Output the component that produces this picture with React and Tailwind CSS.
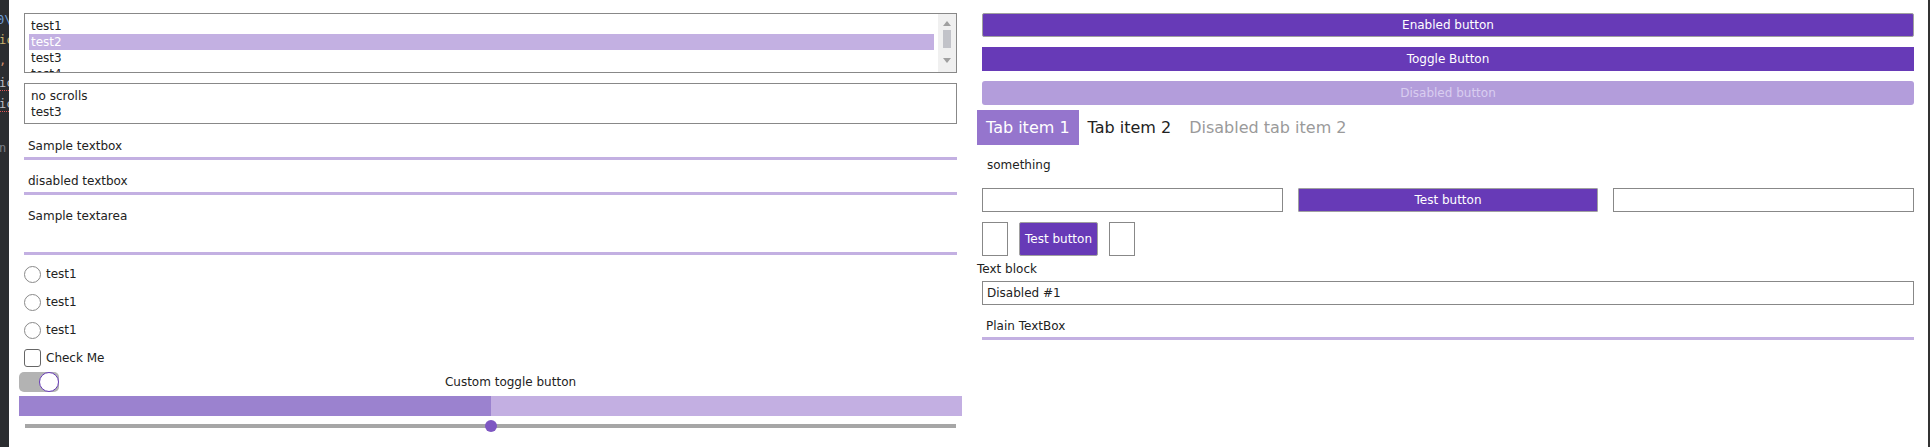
import React from 'react';

const listItems = ['test1', 'test2', 'test3', 'test4'];

const EditorEdge = () => (
  <div className="flex w-[9px] shrink-0 flex-col overflow-hidden bg-[#2b2d30] pt-[10px] font-['DejaVu_Sans_Mono',monospace] text-[12px] leading-[20px]">
    {/* cut-off code from the window behind */}
    <span className="-ml-[3px] text-[#6f9fd8]">0\</span>
    <span className="-ml-[1px] text-[#c9b26d]">ic</span>
    <span className="-ml-[1px] text-[#cf8e6d]">,</span>
    <span className="mt-[6px] -ml-[1px] border-b border-dotted border-[#e05555] leading-[14px] text-[#bcbec4]">ic</span>
    <span className="mt-[6px] -ml-[1px] border-b border-dotted border-[#e05555] leading-[14px] text-[#bcbec4]">ic</span>
    <span className="mt-[26px] -ml-[1px] text-[#7a7e85]">n</span>
  </div>
);

const ListBox = () => (
  <div className="mx-[5px] mt-[5px] flex h-[60px] border border-[#888]">
    <div className="flex-1 overflow-hidden px-[4px] pt-[4px]">
      {listItems.map((item) => (
        <div
          key={item}
          className={`h-4 pl-[2px] ${item === 'test2' ? 'bg-[#c3b0e2] text-white' : ''}`}
        >
          {item}
        </div>
      ))}
    </div>
    <div className="flex w-[18px] flex-col items-center bg-[#f0f0f0] pt-[7px]">
      <svg width="8" height="5" viewBox="0 0 8 5">
        <path d="M0 5 L4 0 L8 5 Z" fill="#a0a0a0" />
      </svg>
      <div className="mt-[4px] h-[18px] w-[8px] bg-[#c2c3c9]" />
      <svg className="mt-[10px]" width="8" height="5" viewBox="0 0 8 5">
        <path d="M0 0 L4 5 L8 0 Z" fill="#a0a0a0" />
      </svg>
    </div>
  </div>
);

const UnderlineBox = ({ text, className = '', height = 'h-[26px]', top = false }) => (
  <div
    className={`mx-[5px] ${height} flex border-b-[3px] border-[#c3b0e2] pl-[4px] ${
      top ? 'items-start pt-[4px]' : 'items-center'
    } ${className}`}
  >
    {text}
  </div>
);

const Radio = ({ label }) => (
  <div className="mx-[5px] flex h-[28px] items-center gap-[5px]">
    <div className="h-[17px] w-[17px] rounded-full border border-[#8a8a8a]" />
    <span>{label}</span>
  </div>
);

const LeftColumn = () => (
  <div className="flex w-[943px] shrink-0 flex-col">
    <ListBox />
    <div className="mx-[5px] mt-[10px] h-[41px] border border-[#888] pl-[6px] pt-[4px]">
      <div>no scrolls</div>
      <div>test3</div>
    </div>
    <UnderlineBox text="Sample textbox" className="mt-[10px]" />
    <UnderlineBox text="disabled textbox" className="mt-[9px]" />
    <UnderlineBox text="Sample textarea" className="mt-[9px]" height="h-[51px]" top />

    <div className="mt-[5px]">
      <Radio label="test1" />
      <Radio label="test1" />
      <Radio label="test1" />
      <div className="mx-[5px] flex h-[28px] items-center gap-[5px]">
        <div className="h-[18px] w-[17px] rounded-[3px] border border-[#666]" />
        <span>Check Me</span>
      </div>
    </div>

    {/* custom toggle */}
    <div className="flex h-[20px] items-center">
      <div className="flex h-[20px] w-[40px] justify-end rounded-[5px] bg-[#b3b3b3]">
        <div className="h-[20px] w-[20px] rounded-full border-[1.5px] border-[#673ab7] bg-white" />
      </div>
      <div className="flex-1 text-center">Custom toggle button</div>
    </div>

    {/* progress */}
    <div className="mt-[4px] flex h-[20px] bg-[#c3afe2]">
      <div className="w-1/2 bg-[#9b82cf]" />
    </div>

    {/* slider */}
    <div className="relative mx-[6px] mt-[4px] flex h-[12px] items-center">
      <div className="h-[4px] w-full bg-[#a6a6a6]" />
      <div className="absolute left-1/2 top-0 h-[12px] w-[12px] -translate-x-1/2 rounded-full bg-[#7e57c2]" />
    </div>
  </div>
);

const BigButton = ({ children, variant }) => {
  const styles = {
    enabled: 'border border-[#a0a0a0] bg-[#673ab7] text-white rounded-[2px]',
    toggle: 'bg-[#673ab7] text-white',
    disabled: 'bg-[#b39ddb] text-[#d9cdf0] rounded-[3px]',
  };
  return (
    <div className={`mx-[5px] flex h-[24px] items-center justify-center ${styles[variant]}`}>
      {children}
    </div>
  );
};

const RightColumn = () => (
  <div className="flex flex-1 flex-col">
    <div className="mt-[5px]">
      <BigButton variant="enabled">Enabled button</BigButton>
    </div>
    <div className="mt-[10px]">
      <BigButton variant="toggle">Toggle Button</BigButton>
    </div>
    <div className="mt-[10px]">
      <BigButton variant="disabled">Disabled button</BigButton>
    </div>

    {/* tabs */}
    <div className="mt-[5px] flex h-[35px] text-[16px] leading-5">
      <div className="flex items-center bg-[#9575cd] px-[9px] text-white">Tab item 1</div>
      <div className="flex items-center px-[9px]">Tab item 2</div>
      <div className="flex items-center px-[9px] text-[#9a9a9a]">Disabled tab item 2</div>
    </div>

    <div className="mt-[12px] pl-[10px]">something</div>

    <div className="mx-[5px] mt-[15px] grid h-[24px] grid-cols-3 gap-[15px]">
      <div className="border border-[#888]" />
      <div className="flex items-center justify-center rounded-[1px] border border-[#a0a0a0] bg-[#673ab7] text-white">
        Test button
      </div>
      <div className="border border-[#888]" />
    </div>

    <div className="mx-[5px] mt-[10px] flex h-[34px] gap-[11px]">
      <div className="w-[26px] border border-[#888]" />
      <div className="flex w-[79px] items-center justify-center rounded-[2px] border border-[#a0a0a0] bg-[#673ab7] text-white">
        Test button
      </div>
      <div className="w-[26px] border border-[#888]" />
    </div>

    <div className="mt-[5px]">Text block</div>

    <div className="mx-[5px] mt-[4px] flex h-[24px] items-center border border-[#888] pl-[4px]">
      Disabled #1
    </div>

    <UnderlineBox text="Plain TextBox" className="mt-[9px]" />
  </div>
);

export default function App() {
  return (
    <div className="flex h-[447px] w-[1930px] overflow-hidden bg-white font-['DejaVu_Sans',sans-serif] text-[12px] leading-4 text-[#222]">
      <EditorEdge />
      <div className="flex flex-1 gap-[15px] pl-[10px] pr-[9px] pt-[8px]">
        <LeftColumn />
        <RightColumn />
      </div>
      <div className="w-[2px] shrink-0 bg-[#333]" />
    </div>
  );
}
